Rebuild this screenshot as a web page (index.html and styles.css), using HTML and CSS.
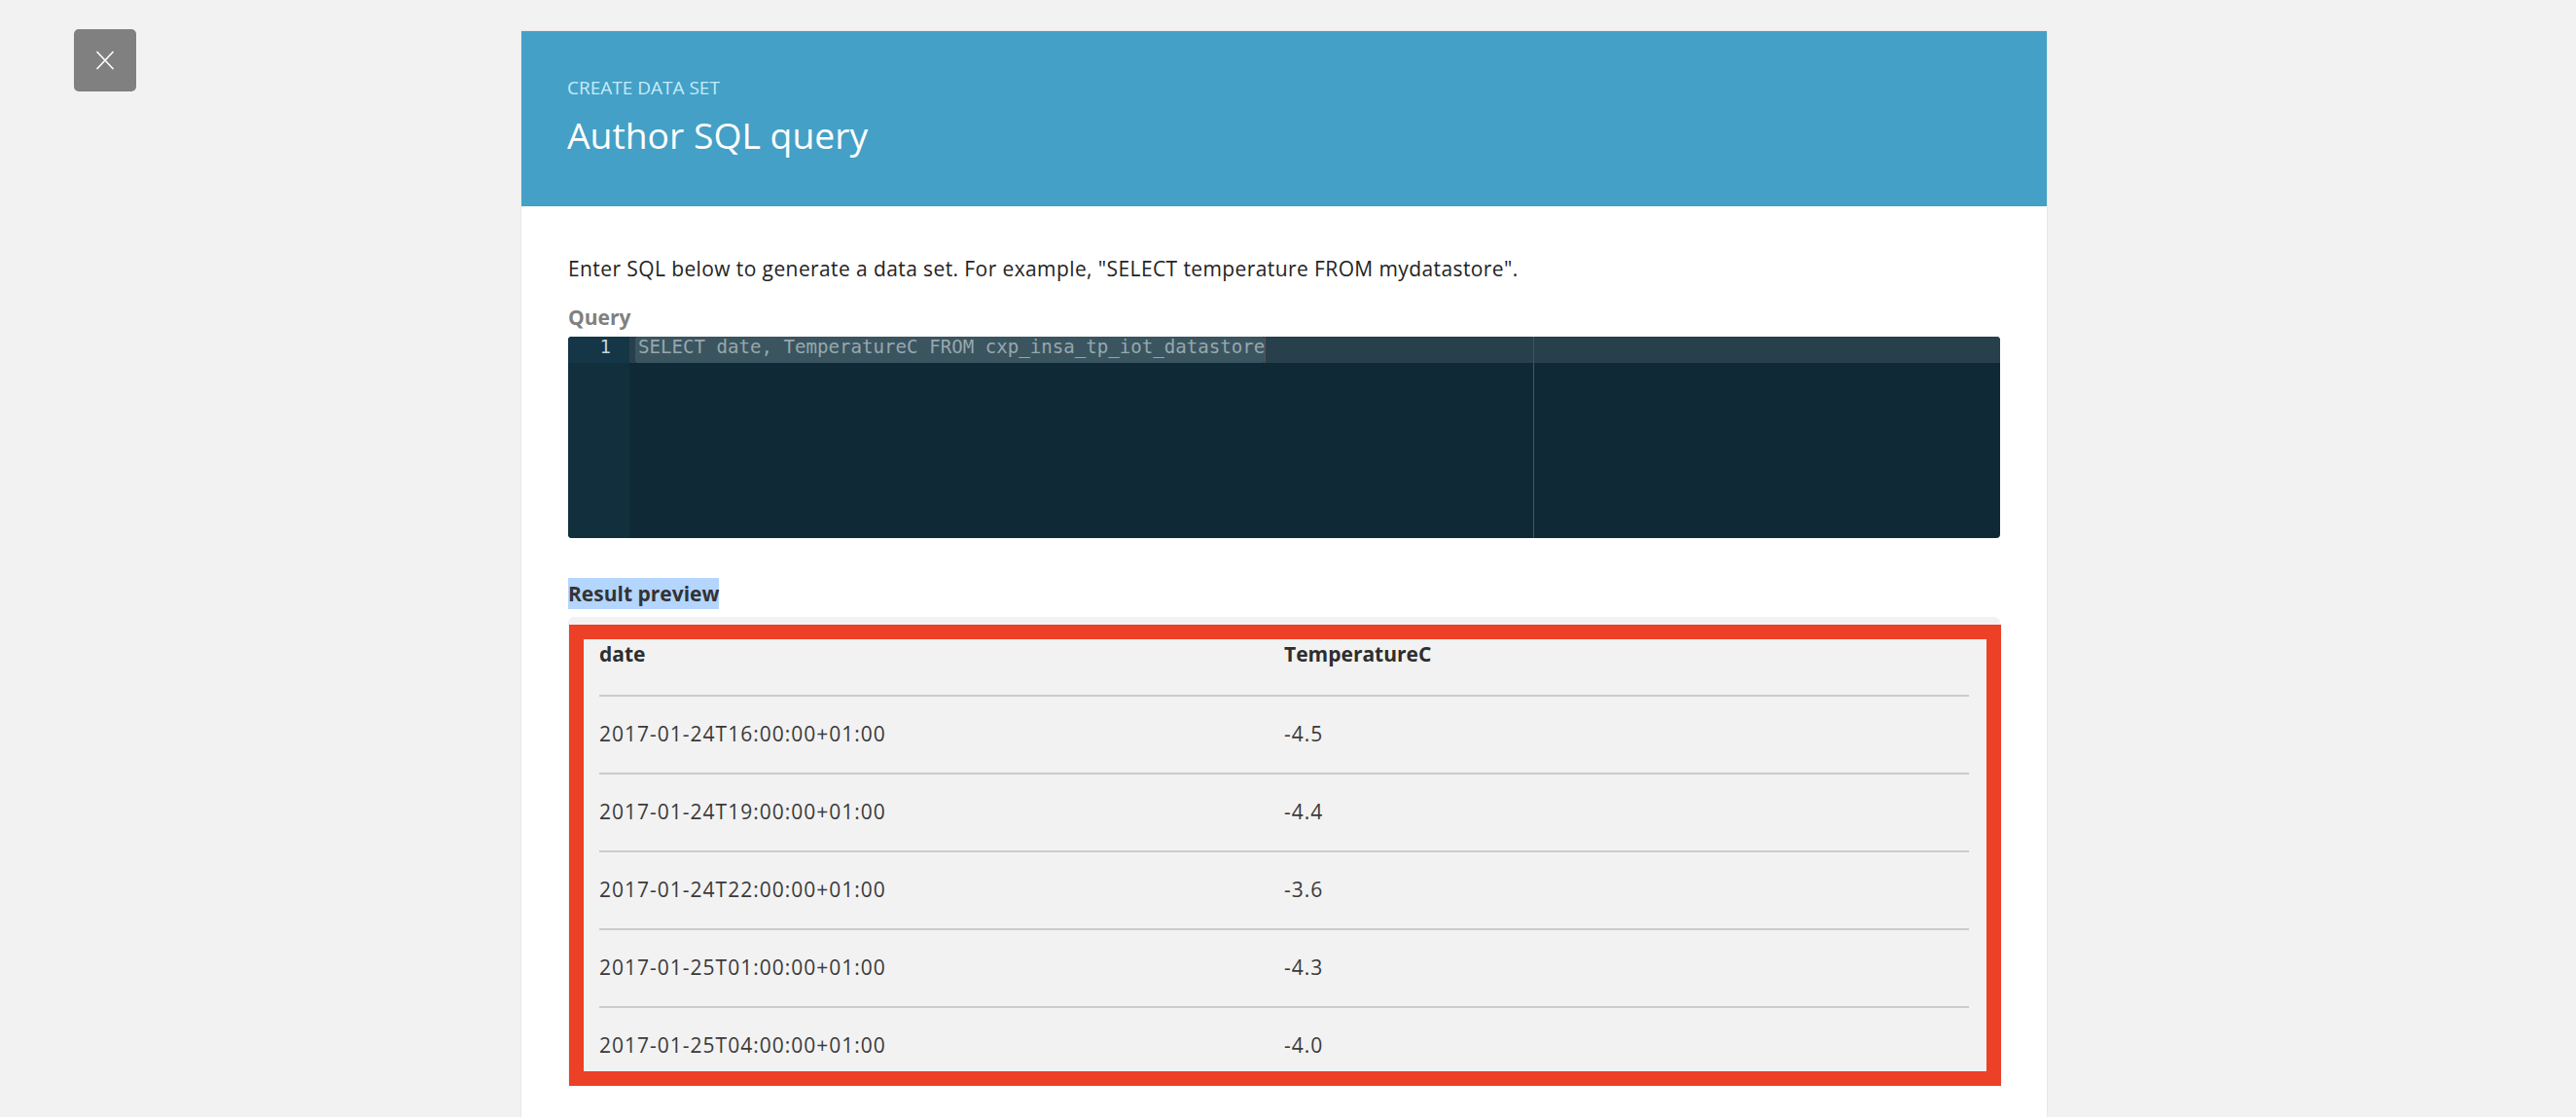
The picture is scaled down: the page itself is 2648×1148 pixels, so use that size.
FILE: index.html
```html
<!DOCTYPE html>
<html lang="en">
<head>
<meta charset="utf-8">
<title>Author SQL query</title>
<link rel="stylesheet" href="styles.css">
</head>
<body>
<div class="page">
  <button class="close" aria-label="Close">
    <svg width="20" height="20" viewBox="0 0 20 20"><path d="M1.5 1 L18.5 19 M18.5 1 L1.5 19" stroke="#fff" stroke-width="1.6" fill="none"/></svg>
  </button>
  <main class="panel">
    <header class="panel-head">
      <div class="eyebrow">CREATE DATA SET</div>
      <h1 class="title">Author SQL query</h1>
    </header>
    <section class="panel-body">
      <p class="intro">Enter SQL below to generate a data set. For example, "SELECT temperature FROM mydatastore".</p>
      <div class="label">Query</div>
      <div class="editor">
        <div class="gutter"><div class="gutter-cell">1</div></div>
        <div class="code">
          <div class="line"><span class="sel">SELECT date, TemperatureC FROM cxp_insa_tp_iot_datastore</span><span class="cursor"></span></div>
          <div class="print-margin"></div>
        </div>
      </div>
      <h2 class="result-title"><span class="hl">Result preview</span></h2>
      <div class="result">
        <table class="grid">
          <thead><tr><th>date</th><th>TemperatureC</th></tr></thead>
          <tbody>
            <tr><td>2017-01-24T16:00:00+01:00</td><td>-4.5</td></tr>
            <tr><td>2017-01-24T19:00:00+01:00</td><td>-4.4</td></tr>
            <tr><td>2017-01-24T22:00:00+01:00</td><td>-3.6</td></tr>
            <tr><td>2017-01-25T01:00:00+01:00</td><td>-4.3</td></tr>
            <tr><td>2017-01-25T04:00:00+01:00</td><td>-4.0</td></tr>
          </tbody>
        </table>
        <div class="annot"></div>
      </div>
    </section>
  </main>
</div>
</body>
</html>
```

FILE: styles.css
```css
* { box-sizing: border-box; margin: 0; padding: 0; }
html, body { height: 100%; }
body {
  background: #f2f2f2;
  font-family: "Open Sans", "Noto Sans", sans-serif;
  color: #333;
  overflow: hidden;
}
.page {
  display: flex;
  align-items: flex-start;
  padding-left: 76px;
  min-height: 100vh;
}
.close {
  flex: none;
  margin-top: 30px;
  width: 64px;
  height: 64px;
  border: none;
  border-radius: 5px;
  background: #808080;
  display: flex;
  align-items: center;
  justify-content: center;
}
.panel {
  flex: none;
  margin-left: 396px;
  margin-top: 32px;
  width: 1568px;
  min-height: calc(100vh - 32px);
  background: #fff;
  box-shadow: 0 0 0 1px #e9e9e9;
}
.panel-head {
  height: 180px;
  background: #44a0c6;
  padding: 45px 47px 0;
}
.eyebrow {
  font-size: 19px;
  line-height: 26px;
  color: #c4ecfa;
}
.title {
  margin-top: 12px;
  font-size: 37.3px;
  line-height: 48px;
  font-weight: 400;
  color: #fff;
}
.panel-body { padding: 48px 48px 0; }
.intro {
  font-size: 21px;
  line-height: 32px;
  letter-spacing: 0.4px;
  color: #232323;
}
.label {
  margin-top: 19px;
  font-size: 21px;
  line-height: 30px;
  font-weight: 700;
  color: #808080;
}
.editor {
  margin-top: 5px;
  height: 207px;
  display: flex;
  background: #0f2a36;
  border-radius: 4px;
  overflow: hidden;
  font-family: "DejaVu Sans Mono", "Liberation Mono", monospace;
  font-size: 19.13px;
}
.gutter {
  flex: none;
  width: 63px;
  background: #112f3d;
}
.gutter-cell {
  height: 27px;
  line-height: 22px;
  text-align: right;
  padding-right: 19px;
  background: #143646;
  color: #c6d3d8;
}
.code {
  flex: 1;
  position: relative;
}
.line {
  display: flex;
  height: 27px;
  background: #27404b;
  padding-left: 6px;
}
.sel {
  display: inline-block;
  height: 27px;
  line-height: 22px;
  padding-left: 3px;
  background: #3b5560;
  border-radius: 3px;
  color: #97a7ad;
  white-space: pre;
}
.cursor {
  width: 1px;
  height: 27px;
  background: #6a4a4c;
}
.print-margin {
  position: absolute;
  top: 0;
  bottom: 0;
  left: 929px;
  width: 1px;
  background: #3e5763;
}
.result-title {
  margin-top: 41px;
  height: 32px;
  font-size: 21px;
  font-weight: 700;
  color: #333;
}
.hl {
  display: inline-block;
  line-height: 32px;
  background: #b4d5fe;
}
.result {
  position: relative;
  margin-top: 8px;
  background: #f2f2f2;
  border-radius: 6px 6px 0 0;
  padding: 0 32px;
}
.grid {
  width: 100%;
  border-collapse: separate;
  border-spacing: 0;
  table-layout: fixed;
}
.grid th, .grid td {
  text-align: left;
  vertical-align: top;
  font-size: 21px;
  line-height: 30px;
  border-bottom: 2px solid #cbcbcb;
}
.grid th {
  padding: 23px 0 27px;
  font-weight: 700;
  color: #2e2e2e;
}
.grid td {
  padding: 23px 0 25px;
  font-weight: 400;
  color: #3a3a3a;
  letter-spacing: 1px;
}
.grid tbody tr:last-child td { border-bottom: none; }
.annot {
  position: absolute;
  left: 1px;
  top: 8px;
  width: 1472px;
  height: 474px;
  border: 15px solid #ec4027;
}
```
